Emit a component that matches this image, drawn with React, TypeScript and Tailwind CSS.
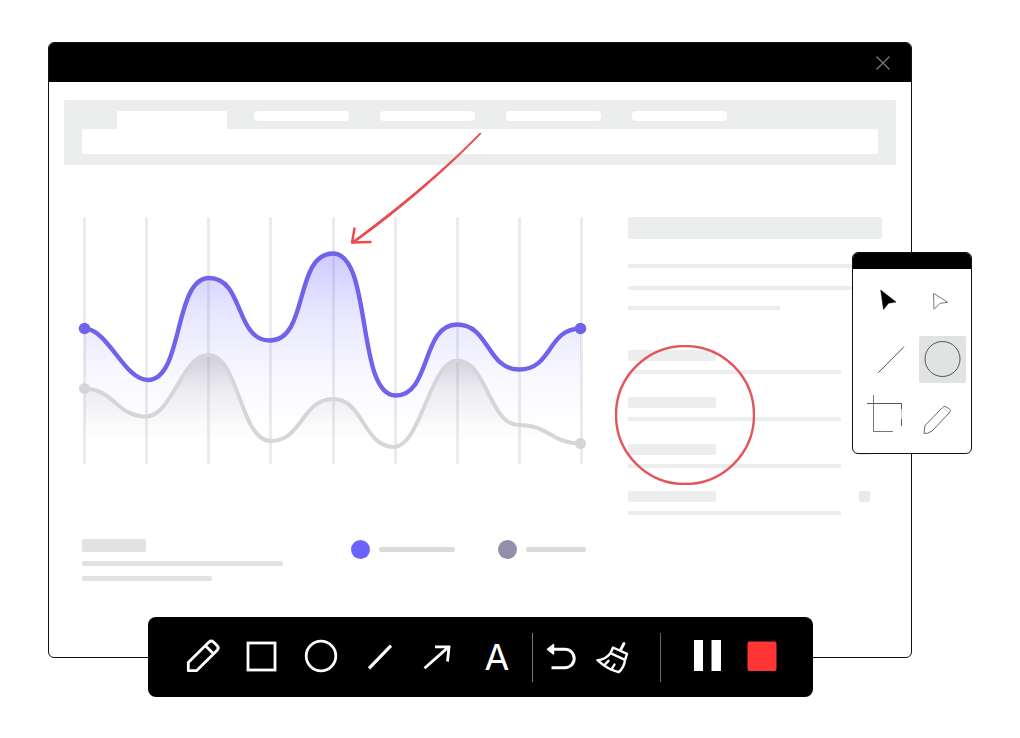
import type { ReactNode } from "react"

// [x, y, tension towards the next point]
type Point = [number, number, number]

const gridLines = [8, 70, 132, 194, 257, 319, 381, 443, 505]

const usage: Point[] = [
  [8, 112.5, 0.38],
  [72, 164, 0.58],
  [133, 62, 0.58],
  [194, 124.5, 0.62],
  [257, 37.5, 0.63],
  [319.5, 179.5, 0.58],
  [381, 108.5, 0.52],
  [443, 153.5, 0.55],
  [505, 112.5, 0],
]

const baseline: Point[] = [
  [8, 172.5, 0.48],
  [70, 200.5, 0.42],
  [132, 139, 0.5],
  [195, 225, 0.5],
  [257, 183, 0.5],
  [318, 231, 0.42],
  [381, 144.5, 0.48],
  [443, 209, 0.48],
  [505, 227.5, 0],
]

const details = [1, 2, 3, 4]

function smooth(points: Point[]) {
  let d = `M${points[0][0]} ${points[0][1]}`
  for (let i = 1; i < points.length; i++) {
    const [x0, y0, t] = points[i - 1]
    const [x1, y1] = points[i]
    const dx = (x1 - x0) * t
    d += ` C${x0 + dx} ${y0} ${x1 - dx} ${y1} ${x1} ${y1}`
  }
  return d
}

function ToolButton({ label, children }: { label: string; children: ReactNode }) {
  return (
    <button type="button" aria-label={label} className="h-10 w-10 shrink-0">
      <svg
        viewBox="0 0 40 40"
        className="h-10 w-10"
        fill="none"
        stroke="#fff"
        strokeWidth={2.8}
        strokeLinecap="round"
        strokeLinejoin="round"
      >
        {children}
      </svg>
    </button>
  )
}

function PaletteButton({ label, active, children }: { label: string; active?: boolean; children: ReactNode }) {
  return (
    <button
      type="button"
      aria-label={label}
      aria-pressed={!!active}
      className={active ? "h-[47px] w-[47px] rounded-xs bg-[#e1e2e2]" : "h-[47px] w-[47px]"}
    >
      <svg viewBox="0 0 47 47" className="h-[47px] w-[47px]" fill="none" stroke="#555" strokeWidth={1}>
        {children}
      </svg>
    </button>
  )
}

function BrowserHeader() {
  return (
    <div className="mx-[15px] mt-[18px] rounded-xs bg-[#eceeee] px-[18px] py-[11px]">
      <div className="flex h-[18px] pl-[35px]">
        <div className="h-full w-[110px] rounded-t-xs bg-white" />
        <div className="ml-[27px] flex gap-[31px]">
          {details.map((n) => (
            <div key={n} className="h-[10px] w-[95px] rounded-sm bg-white" />
          ))}
        </div>
      </div>
      <div className="h-[25px] rounded-xs bg-white" />
    </div>
  )
}

function Chart() {
  const usagePath = smooth(usage)
  const baselinePath = smooth(baseline)

  return (
    <div className="relative">
      <svg viewBox="0 0 514 250" className="block w-full" role="img" aria-label="Usage chart">
        <defs>
          <linearGradient id="usageFill" gradientUnits="userSpaceOnUse" x1="0" y1="36" x2="0" y2="210">
            <stop offset="0" stopColor="#6c63ff" stopOpacity="0.34" />
            <stop offset="0.35" stopColor="#6c63ff" stopOpacity="0.16" />
            <stop offset="0.7" stopColor="#6c63ff" stopOpacity="0.05" />
            <stop offset="1" stopColor="#6c63ff" stopOpacity="0" />
          </linearGradient>
          <linearGradient id="baselineFill" gradientUnits="userSpaceOnUse" x1="0" y1="138" x2="0" y2="225">
            <stop offset="0" stopColor="#9a9aa0" stopOpacity="0.4" />
            <stop offset="0.45" stopColor="#9a9aa0" stopOpacity="0.13" />
            <stop offset="1" stopColor="#9a9aa0" stopOpacity="0" />
          </linearGradient>
        </defs>
        {gridLines.map((x) => (
          <line key={x} x1={x + 0.5} x2={x + 0.5} y1="1.5" y2="248" stroke="#ebebec" strokeWidth="3" />
        ))}
        <path d={`${usagePath} V248 H8 Z`} fill="url(#usageFill)" />
        <path d={`${baselinePath} V248 H8 Z`} fill="url(#baselineFill)" />
        <path d={baselinePath} fill="none" stroke="#d5d5da" strokeWidth="4" />
        <path d={usagePath} fill="none" stroke="#6f63ec" strokeWidth="4.4" />
        <circle cx="8.5" cy="172.5" r="5.5" fill="#d5d5da" />
        <circle cx="504.5" cy="227.5" r="5.5" fill="#d5d5da" />
        <circle cx="8.5" cy="112.5" r="5.8" fill="#6f63ec" />
        <circle cx="504.5" cy="112.5" r="5.8" fill="#6f63ec" />
      </svg>

      {/* hand drawn arrow, a little heavier in the middle */}
      <svg viewBox="0 0 132 112" className="absolute -top-[84px] left-[274px] h-28 w-[132px]" aria-hidden="true">
        <path
          d="M131 1.5 C99 35 54 75 3 111.5 L2 110 C52 73 98 34 130 1 Z"
          fill="#ea4b50"
          stroke="#ea4b50"
          strokeWidth="1"
          strokeLinejoin="round"
        />
        <path
          d="M4.5 96.5 L2 110.5 L20.5 110"
          fill="none"
          stroke="#f0484b"
          strokeWidth="2.4"
          strokeLinecap="round"
          strokeLinejoin="round"
        />
      </svg>
    </div>
  )
}

function ChartFooter() {
  return (
    <div className="mt-[73px] flex items-start justify-between pr-1 pl-1.5">
      <div className="w-[201px]">
        <div className="h-[13px] w-16 rounded-xs bg-[#e2e2e2]" />
        <div className="mt-[9px] h-[5px] w-full rounded-xs bg-[#e2e2e2]" />
        <div className="mt-[10px] h-[5px] w-[130px] rounded-xs bg-[#e2e2e2]" />
      </div>
      <div className="flex gap-[43px] pt-px">
        <div className="flex items-center gap-[9px]">
          <span className="h-[19px] w-[19px] rounded-full bg-[#6c63ff]" />
          <span className="h-[5px] w-[76px] rounded-xs bg-[#dbdbdb]" />
        </div>
        <div className="flex items-center gap-[9px]">
          <span className="h-[19px] w-[19px] rounded-full bg-[#9190a8]" />
          <span className="h-[5px] w-[60px] rounded-xs bg-[#dbdbdb]" />
        </div>
      </div>
    </div>
  )
}

function SidePanel() {
  return (
    <div className="relative pt-px">
      <div className="h-[22px] rounded-xs bg-[#eceeee]" />
      <div className="mt-[25px] h-1 bg-[#eceeee]" />
      <div className="mt-[18px] h-1 bg-[#eceeee]" />
      <div className="mt-4 h-1 w-[152px] bg-[#eceeee]" />
      <div className="mt-10 grid gap-[23px]">
        {details.map((n) => (
          <div key={n}>
            <div className="flex justify-between pr-3">
              <div className="h-[11px] w-[88px] rounded-xs bg-[#eceeee]" />
              <div className="h-[11px] w-[11px] rounded-xs bg-[#e9e9ea]" />
            </div>
            <div className="mt-[9px] h-1 w-[213px] bg-[#eceeee]" />
          </div>
        ))}
      </div>
      <svg viewBox="0 0 140 140" className="absolute top-[129px] -left-[13px] h-[140px] w-[140px]" aria-hidden="true">
        <circle cx="70" cy="70" r="69" fill="none" stroke="#e4555b" strokeWidth="2.4" />
      </svg>
    </div>
  )
}

function Palette() {
  return (
    <div className="absolute top-[209px] -right-[61px] overflow-hidden rounded-md border border-[#111] bg-white">
      <div className="h-4 bg-black" />
      <div className="grid grid-cols-2 gap-x-[7px] gap-y-3 pt-2 pr-[5px] pb-[11px] pl-3">
        <PaletteButton label="Select">
          <path d="M15.7 13 L31 25 L23.5 26.2 L18.5 32.5 Z" fill="#000" stroke="#000" strokeWidth={0.5} />
        </PaletteButton>
        <PaletteButton label="Direct select">
          <path d="M14.5 16.3 L28.7 25.3 L21 26.3 L15 32.3 Z" stroke="#777" strokeLinejoin="round" />
        </PaletteButton>
        <PaletteButton label="Line">
          <path d="M13.3 36.7 L39 10.7" />
        </PaletteButton>
        <PaletteButton label="Ellipse" active>
          <circle cx="23.5" cy="23" r="17.5" />
        </PaletteButton>
        <PaletteButton label="Crop">
          <path d="M2 8.5 H36.5 V14 M36.5 24 V31" />
          <path d="M8.5 0 V36.5 H28" stroke="#777" />
          <path d="M36.5 14 V24" stroke="#ccc" />
        </PaletteButton>
        <PaletteButton label="Pencil">
          <path
            d="M5 38.3 L6 30.5 L23.5 12.5 Q25 10.8 27 11.8 L30.5 14 Q32.2 15.2 31 17 L13 36 L8.5 38.3 Z"
            stroke="#666"
            strokeLinejoin="round"
          />
          <path d="M23.5 12.5 L30.5 18" stroke="#ccc" />
        </PaletteButton>
      </div>
    </div>
  )
}

function Toolbar() {
  return (
    <div className="absolute right-[98px] -bottom-10 left-[99px] flex h-20 items-center rounded-lg bg-black pl-[34px]">
      <div className="flex gap-[19px]">
        <ToolButton label="Pencil">
          <path d="M6.3 25.5 V33.7 H14.5 L35.2 13.2 Q37.2 11 35.2 8.8 L31.5 5 Q29.2 3 27 5 Z M23.5 8.8 L31.2 16.5" />
        </ToolButton>
        <ToolButton label="Rectangle">
          <rect x="7" y="6" width="27" height="27" strokeLinejoin="miter" />
        </ToolButton>
        <ToolButton label="Ellipse">
          <circle cx="21" cy="19" r="14.8" />
        </ToolButton>
        <ToolButton label="Line">
          <path d="M10 31.3 L32 8.6" strokeLinecap="butt" strokeWidth={3.2} />
        </ToolButton>
        <ToolButton label="Arrow">
          <path d="M6.5 31.3 L31 9.6 M17 9.8 H31 L29.5 24.5" strokeLinecap="butt" strokeLinejoin="miter" />
        </ToolButton>
        <button
          type="button"
          aria-label="Text"
          className="h-10 w-10 font-['Inter',sans-serif] text-4xl leading-10 text-white"
        >
          A
        </button>
      </div>
      <div className="ml-[15px] h-[49px] w-px bg-[#777]" />
      <div className="ml-2 flex gap-[11px]">
        <ToolButton label="Undo">
          <path d="M11 12.3 H24 A9.2 9.2 0 0 1 24 30.7 H10.5" strokeLinecap="butt" strokeWidth={3} />
          <path d="M6.5 12.3 L12.5 7.5 V17 Z" fill="#fff" strokeWidth={1.5} />
        </ToolButton>
        <ToolButton label="Clear">
          <g strokeWidth={2.4}>
            <path d="M32 6.5 L28.5 13" strokeWidth={2.8} />
            <path d="M21 10.5 L35 16.8 L33 22.8 L18.5 16.2 Z" />
            <path d="M18.5 16.2 C15 20.5 10.5 22.8 5.5 23.2 C11 28.5 18 33 26.5 35.2 C30.5 32 32.5 28 33 22.8" />
            <path d="M12.5 28 L16.5 23.8 M19.5 32.5 L22.5 27.5" />
          </g>
        </ToolButton>
      </div>
      <div className="ml-7 h-[49px] w-px bg-[#666]" />
      <div className="ml-[27px] flex gap-[14px]">
        <ToolButton label="Pause">
          <path d="M6 3 h9 v31 h-9 Z M23.5 3 h9.5 v31 h-9.5 Z" fill="#fff" stroke="none" />
        </ToolButton>
        <ToolButton label="Stop">
          <rect x="5.5" y="4.5" width="29" height="29.5" rx="2" fill="#ff3434" stroke="none" />
        </ToolButton>
      </div>
    </div>
  )
}

export default function App() {
  return (
    <main className="min-h-screen bg-white pt-[42px] pr-[108px] pb-10 pl-12">
      <div className="relative rounded-md border border-[#111] bg-white">
        <div className="flex h-[39px] items-center justify-end rounded-t-[5px] bg-black pr-5">
          <button type="button" aria-label="Close" className="h-4 w-4">
            <svg viewBox="0 0 16 16" className="h-4 w-4" stroke="#777" strokeWidth={1.4} fill="none">
              <path d="M1.5 1.5 L14.5 14.5 M14.5 1.5 L1.5 14.5" />
            </svg>
          </button>
        </div>

        <BrowserHeader />

        <div className="grid grid-cols-[514fr_254fr] gap-x-[38px] pt-[51px] pr-[29px] pb-[76px] pl-[27px]">
          <div>
            <Chart />
            <ChartFooter />
          </div>
          <SidePanel />
        </div>

        <Palette />
        <Toolbar />
      </div>
    </main>
  )
}
